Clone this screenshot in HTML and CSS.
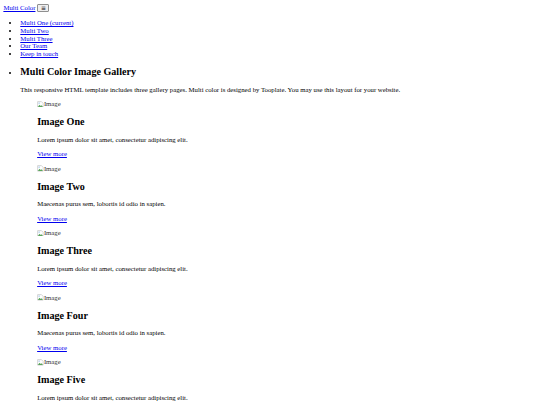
FILE: index.html
```html
<!DOCTYPE html>
<html lang="en">
<head>
<meta charset="utf-8">
<title>Multi Color</title>
<link rel="stylesheet" href="styles.css">
</head>
<body>
<header class="site-header">
  <nav class="topnav">
    <div class="brand-row"><a href="#" class="brand">Multi Color</a> <button class="menu-btn" type="button">&#8801;</button></div>
    <ul class="list">
      <li><a href="#">Multi One (current)</a></li>
      <li><a href="#">Multi Two</a></li>
      <li><a href="#">Multi Three</a></li>
      <li><a href="#">Our Team</a></li>
      <li><a href="#">Keep in touch</a></li>
    </ul>
  </nav>
</header>
<ul class="list">
  <li>
    <h2 class="title">Multi Color Image Gallery</h2>
    <p class="text">This responsive HTML template includes three gallery pages. Multi color is designed by Tooplate. You may use this layout for your website.</p>
    <figure class="item">
      <div class="broken"><svg class="broken-icon" viewBox="0 0 16 16"><path d="M1.5 1.5h9l4 4v9h-13z" fill="#fff" stroke="#9a9a9a"/><path d="M2 14l4-5 3 3 2-2 3 4z" fill="#5aa55a"/><circle cx="5" cy="5" r="1.6" fill="#7fb2e6"/></svg>Image</div>
      <h2 class="title">Image One</h2>
      <p class="text">Lorem ipsum dolor sit amet, consectetur adipiscing elit.</p>
      <p class="text"><a href="#">View more</a></p>
    </figure>
    <figure class="item">
      <div class="broken"><svg class="broken-icon" viewBox="0 0 16 16"><path d="M1.5 1.5h9l4 4v9h-13z" fill="#fff" stroke="#9a9a9a"/><path d="M2 14l4-5 3 3 2-2 3 4z" fill="#5aa55a"/><circle cx="5" cy="5" r="1.6" fill="#7fb2e6"/></svg>Image</div>
      <h2 class="title">Image Two</h2>
      <p class="text">Maecenas purus sem, lobortis id odio in sapien.</p>
      <p class="text"><a href="#">View more</a></p>
    </figure>
    <figure class="item">
      <div class="broken"><svg class="broken-icon" viewBox="0 0 16 16"><path d="M1.5 1.5h9l4 4v9h-13z" fill="#fff" stroke="#9a9a9a"/><path d="M2 14l4-5 3 3 2-2 3 4z" fill="#5aa55a"/><circle cx="5" cy="5" r="1.6" fill="#7fb2e6"/></svg>Image</div>
      <h2 class="title">Image Three</h2>
      <p class="text">Lorem ipsum dolor sit amet, consectetur adipiscing elit.</p>
      <p class="text"><a href="#">View more</a></p>
    </figure>
    <figure class="item">
      <div class="broken"><svg class="broken-icon" viewBox="0 0 16 16"><path d="M1.5 1.5h9l4 4v9h-13z" fill="#fff" stroke="#9a9a9a"/><path d="M2 14l4-5 3 3 2-2 3 4z" fill="#5aa55a"/><circle cx="5" cy="5" r="1.6" fill="#7fb2e6"/></svg>Image</div>
      <h2 class="title">Image Four</h2>
      <p class="text">Maecenas purus sem, lobortis id odio in sapien.</p>
      <p class="text"><a href="#">View more</a></p>
    </figure>
    <figure class="item">
      <div class="broken"><svg class="broken-icon" viewBox="0 0 16 16"><path d="M1.5 1.5h9l4 4v9h-13z" fill="#fff" stroke="#9a9a9a"/><path d="M2 14l4-5 3 3 2-2 3 4z" fill="#5aa55a"/><circle cx="5" cy="5" r="1.6" fill="#7fb2e6"/></svg>Image</div>
      <h2 class="title">Image Five</h2>
      <p class="text">Lorem ipsum dolor sit amet, consectetur adipiscing elit.</p>
      <p class="text"><a href="#">View more</a></p>
    </figure>
  </li>
</ul>
</body>
</html>
```
FILE: styles.css
```css
html {
  background: #ffffff;
}
body {
  margin: 3.375px;
  font-family: "Liberation Serif", "Times New Roman", serif;
  font-size: 6.75px;
  line-height: 7.75px;
  color: #000000;
}
a {
  color: #0000ee;
}
.brand-row {
  display: flex;
  align-items: center;
  gap: 2px;
  height: 9px;
}
.menu-btn {
  font-family: "DejaVu Sans", sans-serif;
  font-size: 6px;
  line-height: 6px;
  width: 12px;
  height: 8.5px;
  padding: 0;
  background: #efefef;
  border: 1px solid #8f8f8f;
  border-radius: 1px;
  color: #000;
}
.list {
  margin: 6.75px 0;
  padding-left: 16.875px;
}
.title {
  font-size: 10.125px;
  line-height: 11.5px;
  margin: 8.15px 0;
}
.text {
  margin: 6.75px 0;
}
.item {
  margin: 6.75px 16.875px;
}
.broken {
  display: flex;
  align-items: center;
  height: 7.75px;
  color: #333;
}
.broken-icon {
  width: 6.75px;
  height: 6.75px;
}
```
